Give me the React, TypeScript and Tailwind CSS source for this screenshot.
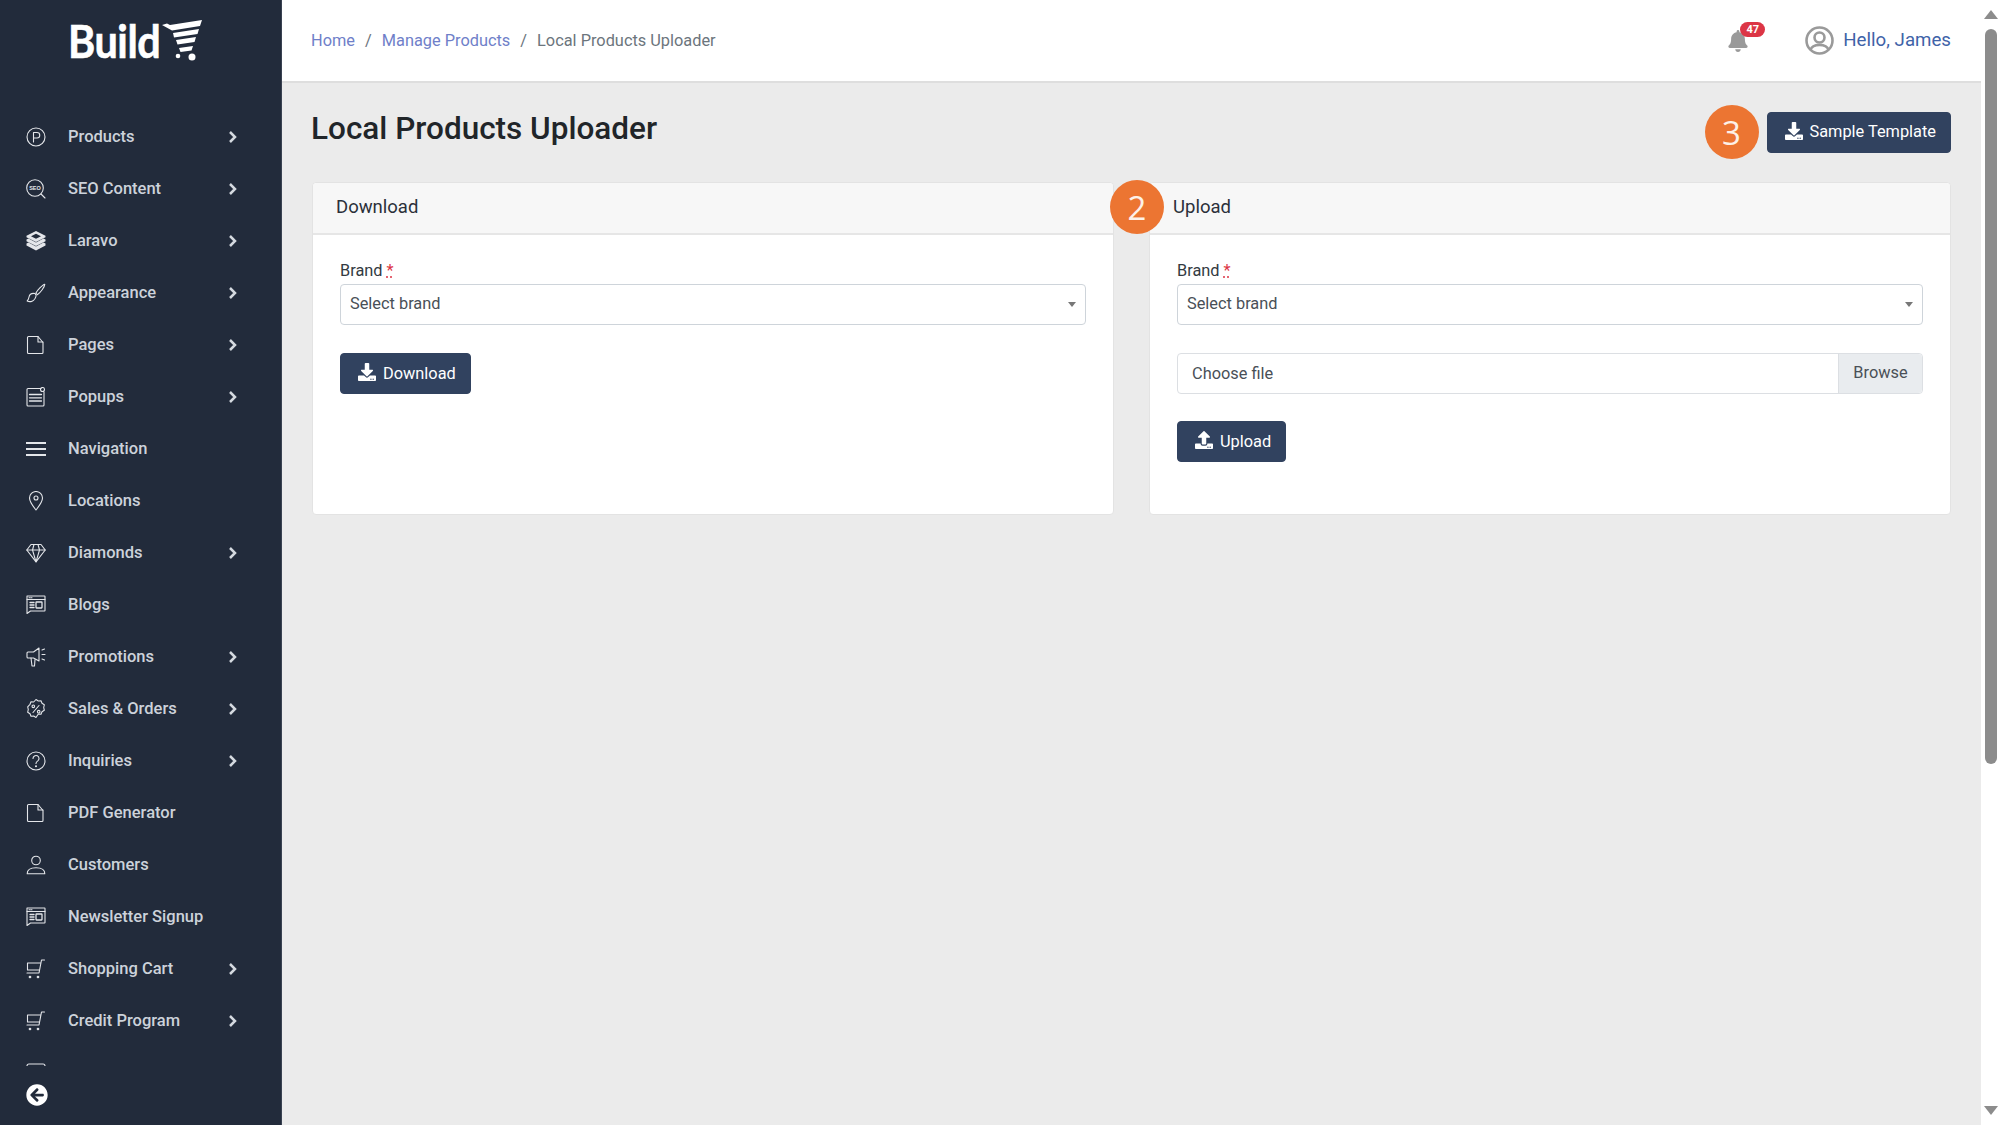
import React from "react";
import { FaBell, FaDownload, FaUpload, FaArrowCircleLeft } from "react-icons/fa";

const S = (p: { children: React.ReactNode }) => (
  <svg width="20" height="20" viewBox="0 0 20 20" fill="none" stroke="currentColor" strokeWidth="1.1" strokeLinecap="round" strokeLinejoin="round">
    {p.children}
  </svg>
);

const FileIcon = () => (
  <S><path d="M1.500 2.500a1 1 0 0 1 1-1h9.500l5 6v10a1 1 0 0 1-1 1h-13.500a1 1 0 0 1-1-1z" /><path d="M12 1.500v5.500h5" /></S>
);
const NewsIcon = () => (
  <S>
    <path d="M1 1h17.500a.5.5 0 0 1 .5.500v14a.5.5 0 0 1-.5.500H4.500L1 18.500z" />
    <path d="M1 4.500h18" />
    <path d="M3 2.800h4" strokeDasharray="1 1" />
    <path d="M4 7.500h4M4 10h4M4 12.500h4" strokeWidth="1.300" />
    <rect x="10" y="7" width="6" height="6" rx=".5" strokeWidth="1.300" />
  </S>
);
const CartIcon = () => (
  <S>
    <path d="M18.500 1h-3l-2.500 13H1" />
    <path d="M14.500 4H1.500v7h11.800" />
    <circle cx="4" cy="18" r=".8" fill="currentColor" />
    <circle cx="12" cy="18" r=".8" fill="currentColor" />
  </S>
);

const icons: Record<string, React.ReactNode> = {
  Products: <S><circle cx="10" cy="10" r="9" /><path d="M7.500 15V5.500h3.500a2.700 2.700 0 0 1 0 5.500H7.500" /></S>,
  "SEO Content": (
    <S>
      <circle cx="9" cy="9" r="8.300" />
      <path d="M15 15l4 4" />
      <text x="9" y="10.900" textAnchor="middle" fontSize="5.500" fontWeight="700" fill="currentColor" stroke="none" fontFamily="'Liberation Sans', sans-serif">SEO</text>
    </S>
  ),
  Laravo: (
    <svg width="20" height="20" viewBox="0 0 20 20" fill="currentColor">
      <path d="M10 0l9.500 4.700v1.600L10 11 .5 6.300V4.700zM10 2.700L5 5.300l5 2.500 5-2.500z" />
      <path d="M.5 8.500l2-1L10 11.500l7.500-4 2 1v1.700L10 15 .5 10.200z" />
      <path d="M.5 12.500l2-1L10 15.500l7.500-4 2 1v2L10 19.500 .5 14.500z" />
    </svg>
  ),
  Appearance: (
    <S>
      <path d="M18.800 1.200c-2 .3-7.500 6-9 9l1.500 1.500c3-1.800 7.500-8 7.500-10.500z" />
      <path d="M9 10.500c-3-.5-5.500 1-6 3.500-.3 1.500-.8 3-1.800 4 2.500 1.300 7.500 1 9-5.500z" />
    </S>
  ),
  Pages: <FileIcon />,
  Popups: (
    <S>
      <path d="M15 1.500H2a1 1 0 0 0-1 1v15.500a1 1 0 0 0 1 1h15a1 1 0 0 0 1-1V5" />
      <path d="M3.500 7.500h12M3.500 10.800h12M3.500 14h12" strokeWidth="1.300" />
      <circle cx="16.500" cy="2.500" r="2" />
    </S>
  ),
  Navigation: (
    <svg width="20" height="20" viewBox="0 0 20 20" fill="currentColor">
      <rect x="0" y="3" width="20" height="2" /><rect x="0" y="9" width="20" height="2" /><rect x="0" y="15" width="20" height="2" />
    </svg>
  ),
  Locations: <S><path d="M10 19C6.500 14.500 3.500 11 3.500 7a6.500 6.500 0 0 1 13 0c0 4-3 7.500-6.500 12z" /><circle cx="10" cy="7" r="2" /></S>,
  Diamonds: (
    <S>
      <path d="M5 1.500h10l4.200 5.500L10 18.800.8 7z" />
      <path d="M.8 7h18.400M6.500 7L10 18.800 13.500 7M6.500 7L8 1.500M13.500 7L12 1.500" />
    </S>
  ),
  Blogs: <NewsIcon />,
  Promotions: (
    <S>
      <path d="M13 1L7.500 5H2a1 1 0 0 0-1 1v4a1 1 0 0 0 1 1h5.500L13 14z" />
      <path d="M5 11l1 8h2.500l.5-6.500" />
      <path d="M16 3l2.500-1M16 7.500h3M16 12l2.500 1" />
    </S>
  ),
  "Sales & Orders": (
    <S>
      <path d="M10 1l2.300 1.500 2.700-.2 1 2.500 2.300 1.500-.6 2.700.6 2.700-2.300 1.500-1 2.500-2.700-.2L10 19l-2.300-1.500-2.700.2-1-2.500-2.300-1.500.6-2.700-.6-2.700L4 5.800l1-2.500 2.700.2z" transform="translate(0 -.5)" />
      <path d="M13 6.500l-6 7" />
      <circle cx="7.300" cy="7.300" r="1.300" />
      <circle cx="12.700" cy="12.700" r="1.300" />
    </S>
  ),
  Inquiries: <S><circle cx="10" cy="10" r="9" /><path d="M7 7.500a3 3 0 1 1 4.800 2.400c-1.200.8-1.800 1.300-1.800 2.600" /><circle cx="10" cy="15.300" r=".5" fill="currentColor" /></S>,
  "PDF Generator": <FileIcon />,
  Customers: <S><circle cx="10" cy="5.500" r="4.300" /><path d="M1.200 18.800c0-4 3.300-6 8.800-6s8.800 2 8.800 6z" /></S>,
  "Newsletter Signup": <NewsIcon />,
  "Shopping Cart": <CartIcon />,
  "Credit Program": <CartIcon />,
  "Market Place": <S><rect x="1" y="1" width="18" height="17" rx="2" /></S>,
};

const menu: [string, boolean][] = [
  ["Products", true], ["SEO Content", true], ["Laravo", true], ["Appearance", true], ["Pages", true], ["Popups", true],
  ["Navigation", false], ["Locations", false], ["Diamonds", true], ["Blogs", false], ["Promotions", true],
  ["Sales & Orders", true], ["Inquiries", true], ["PDF Generator", false], ["Customers", false], ["Newsletter Signup", false],
  ["Shopping Cart", true], ["Credit Program", true], ["Market Place", true],
];

const Logo = () => (
  <div className="flex items-center justify-center h-[82px] pr-[14px]">
    <span className="text-white text-[45px] leading-none font-bold tracking-[-0.5px] font-['Lato',sans-serif] [-webkit-text-stroke:0.6px_white] origin-center scale-x-[0.92] -mr-[3px]">Build</span>
    <svg width="42" height="42" viewBox="0 0 42 42" fill="white" className="mb-[2px]">
      <path d="M1 6l5-1.500L9 6l32-5-2 6-28 4.500z" />
      <path d="M12 14l26-4-1.500 5-23.500 3.500z" />
      <path d="M15 21l20-3-1.500 5-17 2.500z" />
      <path d="M18 29l14-2-1.500 4.500-11 1.500z" />
      <circle cx="17" cy="37" r="2.300" />
      <circle cx="31" cy="38" r="3.500" />
    </svg>
  </div>
);

const Chevron = () => (
  <svg width="9" height="12" viewBox="0 0 9 12" fill="none" stroke="#d5dae0" strokeWidth="2.500" className="mr-[44px]">
    <path d="M2 1l5 5-5 5" />
  </svg>
);

const Sidebar = () => (
  <aside className="w-[281px] shrink-0 h-full flex flex-col bg-[#222b3b] border-r border-[#3a4252] box-content">
    <div className="h-[111px] shrink-0"><Logo /></div>
    <nav className="flex-1 min-h-0 overflow-hidden">
      {menu.map(([name, arrow]) => (
        <div key={name} className="h-[52px] flex items-center pl-[26px] text-[#ccd2da]">
          <span className="w-[42px] shrink-0 flex text-[#e4e6ea]">{icons[name]}</span>
          <span className="text-[16.5px] font-medium leading-6 flex-1 whitespace-nowrap">{name}</span>
          {arrow && <Chevron />}
        </div>
      ))}
    </nav>
    <div className="h-[59px] shrink-0 pl-[26px] pt-[18px] text-white">
      <FaArrowCircleLeft size={22} />
    </div>
  </aside>
);

const UserIcon = () => (
  <svg width="29" height="29" viewBox="0 0 29 29" fill="none" stroke="#9a9a9a" strokeWidth="2.600" className="mr-[9px]">
    <circle cx="14.500" cy="14.500" r="13" />
    <circle cx="14.500" cy="11.500" r="5" />
    <path d="M5.500 24c1-3.500 4-5 9-5s8 1.500 9 5" />
  </svg>
);

const Header = () => (
  <header className="h-[83px] shrink-0 bg-white border-b-2 border-[#dedede] flex items-center pl-[29px] pr-[30px] text-[16.35px]">
    <div className="flex items-center flex-1 text-[#6c757d] pt-[1px]">
      <span className="text-[#6f7fc9]">Home</span>
      <span className="px-[10px]">/</span>
      <span className="text-[#6f7fc9]">Manage Products</span>
      <span className="px-[10px]">/</span>
      <span>Local Products Uploader</span>
    </div>
    <div className="relative mr-[56px] text-[#9a9a9a]">
      <FaBell size={22} />
      <span className="absolute -top-[8px] left-[13px] h-[15px] w-[25px] rounded-full bg-[#dc3545] text-white text-[11px] font-bold leading-[15px] text-center">47</span>
    </div>
    <UserIcon />
    <span className="text-[18.7px] text-[#3f63a8]">Hello, James</span>
  </header>
);

const Badge = ({ n, className = "" }: { n: number; className?: string }) => (
  <span className={`w-[54px] h-[54px] rounded-full bg-[#ec7532] text-[#fdf1e8] text-[33px] font-medium leading-none flex items-center justify-center font-['Open_Sans',sans-serif] ${className}`}>{n}</span>
);

const Btn = ({ icon, children }: { icon: React.ReactNode; children: React.ReactNode }) => (
  <button className="h-[41px] pl-[17px] pr-[14px] bg-[#31425f] border border-[#31425f] rounded-[4px] text-white text-[16.35px] flex items-center gap-[7px]">
    {icon}
    <span className="pt-[1px]">{children}</span>
  </button>
);

const BrandField = () => (
  <>
    <label className="block text-[16.35px] leading-6 text-[#333a42] mb-[1px]">
      Brand <span className="text-[#dc3545] underline decoration-dotted">*</span>
    </label>
    <div className="h-[41px] rounded-[4px] border border-[#ced4da] pl-[9px] pr-[9px] flex items-center justify-between text-[16.35px] text-[#495057]">
      <span>Select brand</span>
      <span className="w-0 h-0 border-x-[4px] border-x-transparent border-t-[5px] border-t-[#777]" />
    </div>
  </>
);

const Card = ({ title, children, className = "" }: { title: string; children: React.ReactNode; className?: string }) => (
  <section className={`relative h-[333px] bg-white border border-[#e3e3e3] rounded-[4px] ${className}`}>
    <div className="h-[52px] bg-[#f7f7f7] border-b-2 border-[#e6e6e6] flex items-center px-[23px] text-[18.5px] text-[#2b303a] rounded-t-[4px]">{title}</div>
    <div className="px-[27px] pt-[24px]">{children}</div>
  </section>
);

export default function App() {
  return (
    <div className="w-full h-screen flex overflow-hidden bg-[#ebebeb] font-['Roboto',sans-serif]">
      <Sidebar />
      <div className="flex-1 min-w-0 flex flex-col h-full">
        <Header />
        <main className="flex-1 px-[30px] pt-[22px]">
          <div className="h-[54px] flex items-center justify-between">
            <h1 className="text-[31.5px] font-medium text-[#212529] pb-[7px] -ml-[1px] leading-9">Local Products Uploader</h1>
            <div className="flex items-center gap-[8px]">
              <Badge n={3} />
              <Btn icon={<FaDownload size={18} className="mb-[3px]" />}>Sample Template</Btn>
            </div>
          </div>
          <div className="grid grid-cols-2 gap-[35px] mt-[23px]">
            <Card title="Download">
              <BrandField />
              <div className="mt-[28px] flex">
                <Btn icon={<FaDownload size={18} className="mb-[3px]" />}>Download</Btn>
              </div>
            </Card>
            <Card title="Upload">
              <Badge n={2} className="absolute -left-[40px] -top-[3px]" />
              <BrandField />
              <div className="mt-[28px] h-[41px] rounded-[4px] border border-[#dcdfe3] flex items-center text-[16.35px] text-[#495057]">
                <span className="flex-1 pl-[14px] pt-[2px]">Choose file</span>
                <span className="w-[84px] h-full bg-[#e9ecef] border-l border-[#dcdfe3] rounded-r-[4px] flex items-center justify-center">Browse</span>
              </div>
              <div className="mt-[27px] flex">
                <Btn icon={<FaUpload size={18} className="mb-[3px]" />}>Upload</Btn>
              </div>
            </Card>
          </div>
        </main>
      </div>
      <div className="w-[19px] shrink-0 h-full bg-white flex flex-col items-center">
        <span className="mt-[10px] w-0 h-0 border-x-[7px] border-x-transparent border-b-[9px] border-b-[#8c8c8c]" />
        <div className="mt-[10px] w-[12px] h-[735px] rounded-full bg-[#8c8c8c]" />
        <div className="flex-1" />
        <span className="mb-[10px] w-0 h-0 border-x-[7px] border-x-transparent border-t-[9px] border-t-[#8c8c8c]" />
      </div>
    </div>
  );
}
